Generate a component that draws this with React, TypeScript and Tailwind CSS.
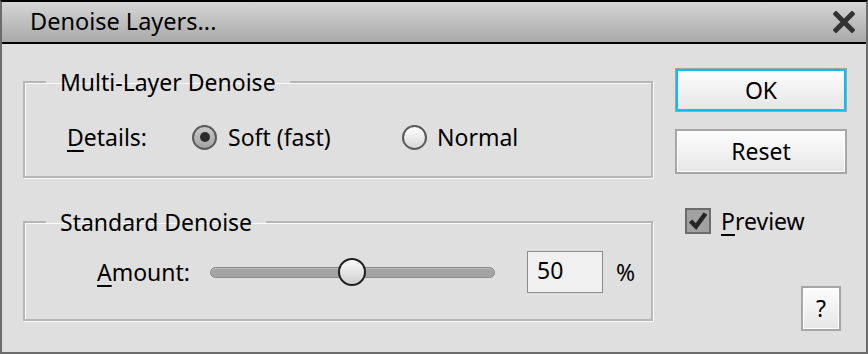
import React from "react";

const font = { fontFamily: '"Noto Sans", "Open Sans", sans-serif' };

function Radio({ checked }: { checked?: boolean }) {
  return (
    <span
      className={
        "flex h-[25px] w-[25px] shrink-0 items-center justify-center rounded-full border-2 border-[#5a5a5a] " +
        (checked
          ? "bg-gradient-to-b from-[#c8c8c8] to-[#a4a4a4]"
          : "bg-gradient-to-b from-[#ffffff] to-[#d8d8d8]")
      }
    >
      {checked && <span className="h-[10px] w-[10px] rounded-full bg-[#2b2b2b]" />}
    </span>
  );
}

export default function App() {
  return (
    <div
      className="flex h-[354px] w-[868px] flex-col overflow-hidden border-2 border-[#6c6c6c] border-t-black bg-[#dfdfdf] text-black"
      style={font}
    >
      {/* title bar */}
      <div className="flex h-[42px] shrink-0 items-center justify-between border-b-2 border-black bg-gradient-to-b from-[#d6d6d6] to-[#a9a9a9] pl-[28px] pr-[11px]">
        <span className="text-[23.5px] leading-none">Denoise Layers...</span>
        <svg width="22" height="22" viewBox="0 0 22 22">
          <path d="M3 3 L19 19 M19 3 L3 19" stroke="#333" strokeWidth="5" strokeLinecap="square" />
        </svg>
      </div>

      {/* body */}
      <div className="flex flex-1 pl-[21px]">
        <div className="flex w-[630px] flex-col">
          <fieldset className="mt-[26px] h-[108px] border-2 border-[#b6b6b6] px-0 shadow-[inset_1px_1px_0_#fbfbfb,1px_1px_0_#fbfbfb]">
            <legend className="ml-[21px] px-[14px] text-[23px] leading-[24px]">Multi-Layer Denoise</legend>
            <div className="mt-[28px] flex h-[30px] items-center pl-[42px] text-[23px]">
              <span className="w-[125px]">
                <span className="underline underline-offset-[4px]">D</span>etails:
              </span>
              <span className="flex w-[210px] items-center gap-[11px]">
                <Radio checked />
                <span>Soft (fast)</span>
              </span>
              <span className="flex items-center gap-[10px]">
                <Radio />
                <span>Normal</span>
              </span>
            </div>
          </fieldset>

          <fieldset className="mt-[32px] h-[111px] border-2 border-[#b6b6b6] px-0 shadow-[inset_1px_1px_0_#fbfbfb,1px_1px_0_#fbfbfb]">
            <legend className="ml-[21px] px-[14px] text-[23px] leading-[24px]">Standard Denoise</legend>
            <div className="mt-[23px] flex h-[30px] items-center pl-[72px] text-[23px]">
              <span className="w-[113px]">
                <span className="underline underline-offset-[4px]">A</span>mount:
              </span>
              <div className="relative flex h-[30px] w-[285px] items-center">
                <div className="h-[11px] w-full rounded-full border border-[#888] bg-[#a4a4a4] shadow-[inset_0_1px_0_#bdbdbd]" />
                <div className="absolute left-[128px] top-[1px] h-[28px] w-[28px] rounded-full border-2 border-[#1f1f1f] bg-gradient-to-b from-[#fafafa] to-[#cfcfcf]" />
              </div>
              <div className="ml-[32px] flex h-[42px] w-[76px] items-center border border-[#8a8a8a] bg-[#f0f0f0] pb-[3px] pl-[9px] leading-none">
                50
              </div>
              <span className="ml-[13px]">%</span>
            </div>
          </fieldset>
        </div>

        {/* right column */}
        <div className="ml-[22px] flex w-[172px] flex-col text-[23px]">
          <button className="mt-[25px] flex h-[42px] w-[170px] self-center items-center justify-center border-2 border-[#00c2f6] bg-gradient-to-b from-[#fdfdfd] to-[#e6e6e6] shadow-[0_0_0_1px_#a3a3a3] leading-none">
            OK
          </button>
          <button className="mt-[18px] flex h-[45px] w-[172px] items-center justify-center border-2 border-[#a6a6a6] bg-gradient-to-b from-[#fdfdfd] to-[#e6e6e6] shadow-[inset_0_0_0_1px_#ffffff] leading-none">
            Reset
          </button>
          <label className="mt-[30px] flex items-center gap-[10px] pl-[10px]">
            <span className="flex h-[26px] w-[26px] items-center justify-center border-2 border-[#6c6c6c] bg-[#a2a2a2]">
              <svg width="20" height="20" viewBox="0 0 20 20">
                <path d="M2.5 10 L8 15.5 L17.5 2.5" fill="none" stroke="#262626" strokeWidth="4.5" />
              </svg>
            </span>
            <span>
              <span className="underline underline-offset-[4px]">P</span>review
            </span>
          </label>
          <button className="mr-[6px] mt-[47px] flex h-[45px] w-[40px] self-end items-center justify-center border-2 border-[#a6a6a6] bg-gradient-to-b from-[#fdfdfd] to-[#e6e6e6] shadow-[inset_0_0_0_1px_#ffffff] leading-none">
            ?
          </button>
        </div>
      </div>
    </div>
  );
}
